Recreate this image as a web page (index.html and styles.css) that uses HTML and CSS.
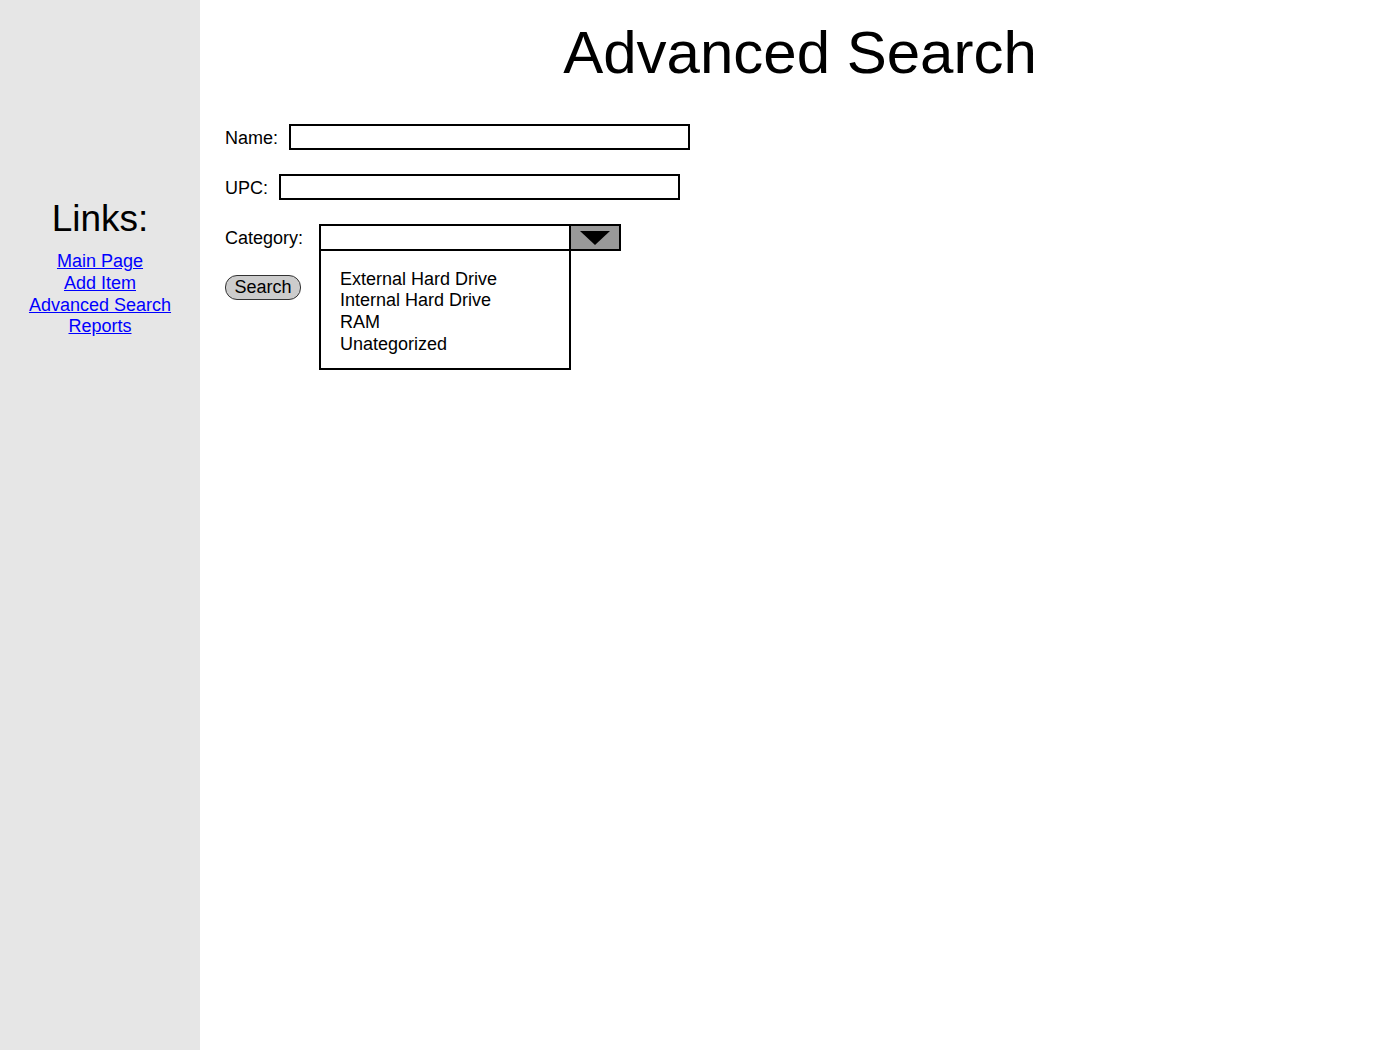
FILE: index.html
```html
<!DOCTYPE html>
<html>
<head>
<meta charset="utf-8">
<title>Advanced Search</title>
<link rel="stylesheet" href="styles.css">
</head>
<body>
<aside class="sidebar">
  <h2 class="links-title">Links:</h2>
  <nav class="links">
    <a href="#">Main Page</a>
    <a href="#">Add Item</a>
    <a href="#">Advanced Search</a>
    <a href="#">Reports</a>
  </nav>
</aside>
<main class="main">
  <h1 class="title">Advanced Search</h1>
  <form class="form">
    <div class="row">
      <label class="label label-name">Name:</label>
      <input class="field" type="text">
    </div>
    <div class="row">
      <label class="label label-upc">UPC:</label>
      <input class="field" type="text">
    </div>
    <div class="row">
      <label class="label label-cat">Category:</label>
      <div class="select">
        <div class="select-box"></div>
        <div class="select-btn">
          <svg width="30" height="15" viewBox="0 0 30 15"><polygon points="0,0 30,0 15,14" fill="#000"/></svg>
        </div>
        <div class="dropdown">
          <div>External Hard Drive</div>
          <div>Internal Hard Drive</div>
          <div>RAM</div>
          <div>Unategorized</div>
        </div>
      </div>
    </div>
    <button class="search-btn" type="button">Search</button>
  </form>
</main>
</body>
</html>
```
FILE: styles.css
```css
html, body {
  margin: 0;
  padding: 0;
}
body {
  display: flex;
  min-height: 1050px;
  font-family: "Liberation Sans", Arial, sans-serif;
  font-size: 18px;
  color: #000;
  background: #fff;
}
.sidebar {
  width: 200px;
  flex: 0 0 200px;
  background: #e6e6e6;
  text-align: center;
  padding-top: 198px;
  box-sizing: border-box;
}
.links-title {
  margin: 0;
  font-weight: normal;
  font-size: 37px;
  line-height: 41px;
}
.links {
  margin-top: 12px;
  display: flex;
  flex-direction: column;
  align-items: center;
  line-height: 21.8px;
}
.links a {
  color: #0000ff;
  text-decoration: underline;
}
.main {
  flex: 1;
}
.title {
  margin: 19px 0 0;
  text-align: center;
  font-weight: normal;
  font-size: 60px;
  line-height: 68px;
}
.form {
  margin-top: 37px;
  padding-left: 25px;
  display: flex;
  flex-direction: column;
  align-items: flex-start;
}
.row {
  display: flex;
  align-items: center;
  height: 26px;
  margin-bottom: 24px;
}
.label {
  padding-top: 3px;
}
.label-name { margin-right: 11px; }
.label-upc { margin-right: 11px; }
.label-cat { margin-right: 16px; }
.field {
  width: 401px;
  height: 26px;
  box-sizing: border-box;
  border: 2px solid #000;
  margin: 0;
  padding: 0 4px;
  font: inherit;
  background: #fff;
}
.select {
  position: relative;
  display: flex;
}
.select-box {
  width: 252px;
  height: 27px;
  box-sizing: border-box;
  border: 2px solid #000;
  background: #fff;
}
.select-btn {
  width: 52px;
  height: 27px;
  box-sizing: border-box;
  border: 2px solid #000;
  margin-left: -2px;
  background: #999;
  display: flex;
  align-items: flex-start;
  justify-content: center;
  padding-top: 5px;
}
.dropdown {
  position: absolute;
  top: 25px;
  left: 0;
  width: 252px;
  height: 121px;
  box-sizing: border-box;
  border: 2px solid #000;
  background: #fff;
  padding: 18px 0 0 19px;
  line-height: 21.8px;
}
.search-btn {
  margin-top: 1px;
  width: 76px;
  height: 25px;
  box-sizing: border-box;
  border: 1px solid #333;
  border-radius: 12px;
  background: #cccccc;
  font: inherit;
  color: #000;
  padding: 0;
  line-height: 21px;
}
```
